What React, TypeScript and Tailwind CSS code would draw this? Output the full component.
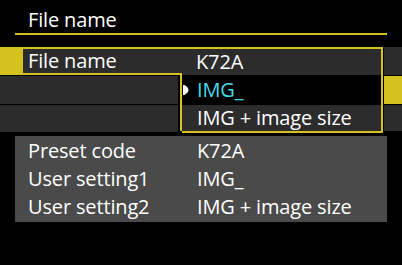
import React from "react";

export default function App() {
  return (
    <div
      className="w-[402px] h-[265px] bg-black text-white overflow-hidden relative tracking-[-0.15px]"
      style={{ fontFamily: '"Open Sans", "Noto Sans", sans-serif' }}
    >
      {/* Title */}
      <div className="pl-[28px] pt-[6px] h-[33px] text-[20px] leading-[27px]">File name</div>
      <div className="ml-[15px] w-[372px] h-[2px] bg-[#d6c21e]" />

      {/* Rows area */}
      <div className="mt-[12px] flex text-[20px]">
        {/* Left column */}
        <div className="w-[182px] flex flex-col gap-[1px]">
          <div className="flex h-[28px]">
            <div className="w-[21px] bg-[#d6c21e]" />
            <div className="flex-1 border-t-2 border-l-2 border-b-2 border-[#d6c21e] bg-[#2c2c2c] pl-[5px] flex items-center leading-none">
              File name
            </div>
          </div>
          <div className="w-[178px] h-[28px] bg-[#2c2c2c]" />
          <div className="w-[178px] h-[27px] bg-[#2c2c2c]" />
        </div>

        {/* Dropdown */}
        <div className="w-[201px] border-t-2 border-r-2 border-b-2 border-[#d6c21e] flex flex-col">
          <div className="h-[26px] bg-[#2c2c2c] pl-[14px] flex items-center leading-none">K72A</div>
          <div className="-ml-[2px] border-l-2 border-[#d6c21e] flex flex-col gap-[1px] pt-[1px]">
            <div className="h-[28px] bg-black flex items-center leading-none">
              <svg width="6" height="12" viewBox="0 0 6 12" className="ml-[1px] mr-[8px]">
                <path d="M0 1 L1.5 1 Q5.5 3.5 5.5 6 Q5.5 8.5 1.5 11 L0 11 Z" fill="#ffffff" />
              </svg>
              <span className="text-[#45dbe6]">IMG_</span>
            </div>
            <div className="h-[26px] bg-[#2c2c2c] pl-[15px] flex items-center leading-none">IMG + image size</div>
          </div>
        </div>

        {/* Right column */}
        <div className="ml-[1px] flex-1 flex flex-col gap-[1px]">
          <div className="h-[28px] bg-[#2c2c2c]" />
          <div className="h-[28px] bg-[#d6c21e]" />
          <div className="h-[26px] bg-[#2c2c2c]" />
        </div>
      </div>

      {/* Bottom panel */}
      <div className="mt-[3px] ml-[15px] w-[372px] h-[86px] bg-[#4a4a4a] flex flex-col py-[1px] text-[20px]">
        {[
          ["Preset code", "K72A"],
          ["User setting1", "IMG_"],
          ["User setting2", "IMG + image size"],
        ].map(([a, b]) => (
          <div key={a} className="flex-1 flex items-center leading-none">
            <span className="pl-[13px] w-[182px]">{a}</span>
            <span>{b}</span>
          </div>
        ))}
      </div>
    </div>
  );
}
